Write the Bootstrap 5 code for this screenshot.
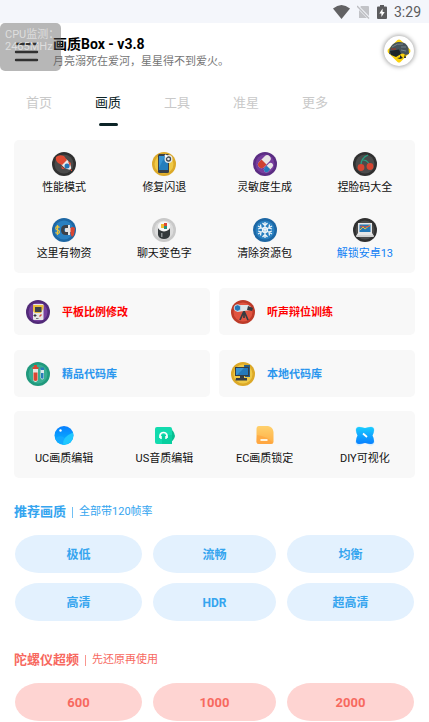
<!DOCTYPE html>
<html lang="zh-CN">
<head>
<meta charset="utf-8">
<meta name="viewport" content="width=device-width, initial-scale=1">
<title>画质Box</title>
<link href="https://cdn.jsdelivr.net/npm/bootstrap@5.3.0/dist/css/bootstrap.min.css" rel="stylesheet">
<style>
  body { font-family: Roboto, "Noto Sans CJK SC", sans-serif; font-size: 11px; line-height: 16px; color: #111; background: #fff; }
  button { font-family: inherit; }
  svg { display: block; flex: none; }
  .status-bar { height: 23px; background: #f4f6fb; color: #5c5c5e; font-size: 14px; padding: 1px 8px 0; gap: 7px; }
  .app-header { padding: 12px 14px 0; height: 57px; }
  .menu-btn { padding: 7px 0 0; margin-right: 14px; }
  .app-title { font-size: 14px; line-height: 18px; font-weight: 700; color: #000; }
  .app-sub { color: #757575; line-height: 18px; }
  .avatar { width: 30px; height: 30px; background: #fff; box-shadow: 0 0 4px 1px #aaa; margin: 1px 1px 0 0; }
  .cpu-float { left: 0; top: 23px; width: 61px; height: 48px; padding: 6px 5px; line-height: 12px; border-radius: 5px; background: rgba(90, 90, 90, .44); color: #dedede; white-space: nowrap; }
  .tab-strip { padding: 14px 0 0 26px; gap: 43px; height: 60px; }
  .tab-strip a { font-size: 13px; line-height: 18px; color: #c9c9c9; text-decoration: none; height: 32px; }
  .tab-strip a.active { color: #0c2427; }
  .tab-strip a.active::after { content: ""; display: block; width: 19px; height: 3px; margin: 11px auto 0; border-radius: 2px; background: #0c2427; }
  .page-main { padding: 0 14px; }
  .panel { background: #f8f8f8; border-radius: 5px; }
  .tool-grid { display: grid; grid-template-columns: repeat(4, 1fr); row-gap: 23px; padding: 12px 0; }
  .tool-btn { padding: 0; border: 0; background: none; color: #111; white-space: nowrap; gap: 4px; height: 43px; }
  .tool-btn.accent { color: #0f80f5; }
  .tile-grid { display: grid; grid-template-columns: 1fr 1fr; gap: 15px 9px; margin: 15px 0 14px; }
  .tile-btn { border: 0; height: 47px; padding: 0 12px; gap: 12px; font-weight: 700; color: #2b96ee; }
  .tile-btn span { padding-top: 2px; }
  .tile-btn.hot { color: #f00; }
  .sec-head { font-size: 11px; line-height: 18px; gap: 6px; margin: 25px 0 14px; }
  .red .sec-head { margin-top: 30px; }
  .sec-head h2 { font-size: 13px; line-height: 18px; font-weight: 700; margin: 0; }
  .sec-head i { width: 1px; height: 11px; background: currentColor; opacity: .7; }
  .blue { color: #35a5ef; }
  .red { color: #f7695f; }
  .pill-grid { display: grid; grid-template-columns: 127fr 123fr 127fr; gap: 10px 11px; padding: 0 1px; }
  .pill-btn { border: 0; height: 38px; padding: 2px 0 0; border-radius: 24px / 19px; font-size: 12px; font-weight: 700; background: #e3f1fe; color: inherit; }
  .red .pill-btn { background: #fed4d2; font-size: 13px; }
</style>
</head>
<body>
<div class="status-bar d-flex align-items-center justify-content-end">
  <svg width="17" height="14" viewBox="0 0 17 14"><path fill="#626264" d="M0 3.500Q8.500-3.500 17 3.500L8.500 14Z"/></svg>
  <svg width="13" height="14" viewBox="0 0 13 14"><path fill="#c2c3c7" d="M4 1H11Q12 1 12 2V13H2V4Z"/><path d="M0 1 12 13" stroke="#f4f6fb" stroke-width="3"/><path d="M0 1 12 13.500" stroke="#bdbec2" stroke-width="1.300"/></svg>
  <svg width="10" height="14" viewBox="0 0 10 14"><path fill="#5c5c5e" d="M3 0H7V1.500H9Q10 1.500 10 2.500V13Q10 14 9 14H1Q0 14 0 13V2.500Q0 1.500 1 1.500H3Z"/><path fill="#fff" d="M5.600 3.500 2.300 8.500H4.400V12L7.700 7H5.600Z"/></svg>
  <span>3:29</span>
</div>

<header class="app-header d-flex align-items-start">
  <button class="menu-btn border-0 bg-transparent" type="button" aria-label="菜单">
    <svg width="25" height="20" viewBox="0 0 25 20"><path d="M2 2H23M2 10H23M2 18H23" stroke="#111" stroke-width="2.400" stroke-linecap="round"/></svg>
  </button>
  <div class="flex-grow-1">
    <div class="app-title">画质Box - v3.8</div>
    <div class="app-sub">月亮溺死在爱河，星星得不到爱火。</div>
  </div>
  <div class="avatar rounded-circle d-flex align-items-center justify-content-center">
    <svg width="26" height="26" viewBox="0 0 26 26"><path fill="#fbd20b" d="M11.500 2Q13 .8 14.500 2L24 11.500Q25 13 24 14.500L14.500 24Q13 25 11.500 24L2 14.500Q1 13 2 11.500Z"/><path fill="#46535a" d="M3.500 11Q6 5 12 4Q20 3 22.500 10L23 16 20 17 17 15.500 9 17 3 16Z"/><path fill="#1d2529" d="M4 13 13 11.500 15 16 10 19 5 17ZM14 17 17 20 14 21 11 20 14 19.500ZM19 16 20 20 18 20Z"/><path d="M6 9Q11 5 17 6M15 9 20 9M15 12 20 13" fill="none" stroke="#75848a"/><path d="M5 11H10" stroke="#893d35" stroke-width="1.500"/></svg>
  </div>
</header>
<div class="cpu-float position-absolute">CPU监测：<br>2465MHz</div>

<nav class="tab-strip d-flex" aria-label="分类">
  <a href="#">首页</a><a href="#" class="active" aria-current="page">画质</a><a href="#">工具</a><a href="#">准星</a><a href="#">更多</a>
</nav>

<main class="page-main">
  <section class="panel tool-grid">
    <button type="button" class="tool-btn d-flex flex-column align-items-center">
      <svg width="24" height="24" viewBox="0 0 24 24"><circle cx="12" cy="12" r="12" fill="#303030"/><circle cx="12" cy="12" r="9.500" fill="#4a4a4a"/><path fill="#e9e9e9" d="M9 12 14 7Q20 11 19 18Q12 17 9 12Z"/><path fill="#e04a32" d="M4 5Q7 2 12 4L15 8 10 13 6 11Q3 8 4 5ZM9 14 13 17 10 17ZM16 9 18 15 19 11Z"/><circle cx="15" cy="14" r="2.500" fill="#2277b8"/><path stroke="#e04a32" d="M18 17 20 19"/></svg>
      <span>性能模式</span></button>
    <button type="button" class="tool-btn d-flex flex-column align-items-center">
      <svg width="24" height="24" viewBox="0 0 24 24"><circle cx="12" cy="12" r="12" fill="#dca928"/><circle cx="12" cy="12" r="9.500" fill="#efc947"/><rect x="6" y="2" width="11" height="19" rx="1.500" fill="#394047"/><path fill="#257ebc" d="M7 4H16V18H7Z"/><path fill="#3794d1" d="M7 4H13L7 16Z"/><circle cx="16.500" cy="7" r="4" fill="#e7e9eb"/><circle cx="16.500" cy="7" r="2" fill="none" stroke="#414a51" stroke-width="1.300"/><path d="M13 3 15 5" stroke="#fff" stroke-width="2"/></svg>
      <span>修复闪退</span></button>
    <button type="button" class="tool-btn d-flex flex-column align-items-center">
      <svg width="24" height="24" viewBox="0 0 24 24"><circle cx="12" cy="12" r="12" fill="#5b2d83"/><circle cx="12" cy="12" r="9.500" fill="#763c9d"/><g transform="rotate(-45 11 10)"><rect x="4" y="6.500" width="15" height="7" rx="3.500" fill="#e8e5e5"/><path fill="#cf4130" d="M11 6.500V13.500H7.500A3.500 3.500 0 0 1 7.500 6.500Z"/></g><g transform="rotate(-45 15.500 15.500)"><rect x="10" y="13" width="11" height="5" rx="2.500" fill="#e8e5e5"/><path fill="#2578ba" d="M15.500 13V18H12.500A2.500 2.500 0 0 1 12.500 13Z"/></g></svg>
      <span>灵敏度生成</span></button>
    <button type="button" class="tool-btn d-flex flex-column align-items-center">
      <svg width="24" height="24" viewBox="0 0 24 24"><circle cx="12" cy="12" r="12" fill="#303030"/><circle cx="12" cy="12" r="9.500" fill="#4b4b4b"/><path d="M8 13Q8 6 15 3M10 8Q14 8 16 12" fill="none" stroke="#26a384" stroke-width="1.200"/><circle cx="8" cy="15.500" r="3.400" fill="#d54531"/><circle cx="17" cy="14.500" r="3.400" fill="#d54531"/></svg>
      <span>捏脸码大全</span></button>
    <button type="button" class="tool-btn d-flex flex-column align-items-center">
      <svg width="24" height="24" viewBox="0 0 24 24"><circle cx="12" cy="12" r="12" fill="#1d67a4"/><circle cx="12" cy="12" r="9.500" fill="#2980c1"/><path d="M7.500 9.500Q6.500 8.500 5 8.700Q3.300 9.200 4 11Q4.500 12 6 12.200Q8 13 7.200 14.800Q6 16 3.500 14.500M5.500 7V17" fill="none" stroke="#efc43a" stroke-width="1.200"/><path fill="#e5e5e5" d="M13 10H20V14H13Z"/><path d="M17 8.500H14Q10.500 8.500 10.500 12Q10.500 15.500 14 15.500H17" fill="none" stroke="#3c4148" stroke-width="3"/><path d="M16 7H18V10H16ZM16 14H18V17H16Z" fill="#e7e7e7"/><path d="M18.500 10Q20 8 23 10L22 17 20 19 18.500 16Z" fill="#d94733"/></svg>
      <span>这里有物资</span></button>
    <button type="button" class="tool-btn d-flex flex-column align-items-center">
      <svg width="24" height="24" viewBox="0 0 24 24"><circle cx="12" cy="12" r="12" fill="#c9c9c9"/><circle cx="12" cy="12" r="9.500" fill="#dcdcdc"/><path fill="#34393b" d="M6 10H18V17Q17 21 12 21Q7 21 6 17Z"/><ellipse cx="12" cy="8.500" rx="6.200" ry="5" fill="#f6f6f6"/><path fill="#8b9092" d="M9 15H10.500V19H9Z"/><path fill="#efbd30" d="M9 6H12V10H9Z"/><path fill="#db4934" d="M12 5H15V8H12Z"/><path fill="#238f80" d="M12 8H15V11H12Z"/></svg>
      <span>聊天变色字</span></button>
    <button type="button" class="tool-btn d-flex flex-column align-items-center">
      <svg width="24" height="24" viewBox="0 0 24 24"><circle cx="12" cy="12" r="12" fill="#1d67a4"/><circle cx="12" cy="12" r="9.500" fill="#2980c1"/><g fill="none" stroke="#edf4f8" stroke-width="1.300"><path d="M12 4V20M5 8 19 16M19 8 5 16M9.500 5 12 7.500 14.500 5M9.500 19 12 16.500 14.500 19M5 11 8 10 7.500 6.500M19 13 16 14 16.500 17.500M16.500 6.500 16 10 19 11M7.500 17.500 8 14 5 13"/><circle cx="12" cy="12" r="2.500"/></g></svg>
      <span>清除资源包</span></button>
    <button type="button" class="tool-btn accent d-flex flex-column align-items-center">
      <svg width="24" height="24" viewBox="0 0 24 24"><circle cx="12" cy="12" r="12" fill="#303030"/><circle cx="12" cy="12" r="9.500" fill="#4b4b4b"/><path fill="#e6e6e6" d="M5 5H19V15L21 18Q21 19 20 19H4Q3 19 3 18L5 15Z"/><path fill="#2579b7" d="M6.500 6.500H17.500V14H6.500Z"/><path d="M7 12 10 9 12 11 17 7" fill="none" stroke="#ebbe37"/><path d="M7 9 9 8 12 9 17 8" fill="none" stroke="#da5040"/><path d="M4 18H20" stroke="#bcbcbc"/></svg>
      <span>解锁安卓13</span></button>
  </section>

  <section class="tile-grid">
    <button type="button" class="panel tile-btn hot d-flex align-items-center">
      <svg width="24" height="24" viewBox="0 0 24 24"><circle cx="12" cy="12" r="12" fill="#512a78"/><circle cx="12" cy="12" r="9.500" fill="#763f9d"/><rect x="7" y="4" width="10.500" height="16" rx="1" fill="#e6e5e5"/><path fill="#eabd3a" d="M7 5H17.500V8L15 13H9Q7 12 7 10Z"/><path fill="#3e4248" d="M9 7H15.500V12H9Z"/><path d="M7.500 15.500H10.500M9 14V17" stroke="#34383e"/><path d="M13.500 16.500 15.500 14.500" stroke="#d64a36" stroke-width="1.500"/><path d="M10 18.500H12.500" stroke="#777"/></svg>
      <span>平板比例修改</span></button>
    <button type="button" class="panel tile-btn hot d-flex align-items-center">
      <svg width="24" height="24" viewBox="0 0 24 24"><circle cx="12" cy="12" r="12" fill="#bd3b29"/><circle cx="12" cy="12" r="9.500" fill="#e15440"/><path d="M13 11 9 20M13 11 13 18M13 11 17 20" stroke="#363b40" stroke-width="1.700"/><path fill="#dee4e7" d="M5 5 17 5 20 7V10L6 12Z"/><path fill="#343b42" d="M17 6 22 8 21 11 16 10Z"/><circle cx="6.500" cy="8" r="3.300" fill="#2477b8" stroke="#c8d9e4"/></svg>
      <span>听声辩位训练</span></button>
    <button type="button" class="panel tile-btn d-flex align-items-center">
      <svg width="24" height="24" viewBox="0 0 24 24"><circle cx="12" cy="12" r="12" fill="#20997d"/><circle cx="12" cy="12" r="9.500" fill="#38ae92"/><path fill="#e8e6e3" d="M7 5H12V18Q9.500 22 7 18Z"/><path fill="#d84833" d="M8 3H11V5H12.500V7H6.500V5H8ZM7.500 10.500H11.500V18Q9.500 20 7.500 18Z"/><path fill="#dce8ec" d="M14.500 7H18V16Q16.200 19 14.500 16Z"/><path fill="#277bb9" d="M14.500 5.500H18V8H14.500ZM15 11H17.500V16Q16.200 17.500 15 16Z"/></svg>
      <span>精品代码库</span></button>
    <button type="button" class="panel tile-btn d-flex align-items-center">
      <svg width="24" height="24" viewBox="0 0 24 24"><circle cx="12" cy="12" r="12" fill="#dca928"/><circle cx="12" cy="12" r="9.500" fill="#efc947"/><path fill="#275e86" d="M13 3H19V15H14Z"/><path fill="#373d43" d="M4 5H18V14H4ZM9 14H13V16H9ZM5 16H16V18.500H4.500Z"/><path fill="#2479ba" d="M5 6H17V13H5Z"/><path fill="#3994d1" d="M5 6H13L6 13H5Z"/></svg>
      <span>本地代码库</span></button>
  </section>

  <section class="panel tool-grid">
    <button type="button" class="tool-btn d-flex flex-column align-items-center">
      <svg width="24" height="24" viewBox="0 0 24 24"><defs><linearGradient id="gBall" x2="0" y2="1"><stop stop-color="#087fff"/><stop offset="1" stop-color="#08baff"/></linearGradient></defs><circle cx="12" cy="12.500" r="9.500" fill="url(#gBall)"/><path fill="#15a9ff" d="M3 15.500Q9 11 13 15.500L12 22Q5 20 3 15.500Z"/><path fill="#20c8ff" d="M11 22Q10 14 21 9.500Q23 20 11 22Z"/><circle cx="8.500" cy="7.500" r="1.200" fill="#fff"/></svg>
      <span>UC画质编辑</span></button>
    <button type="button" class="tool-btn d-flex flex-column align-items-center">
      <svg width="24" height="24" viewBox="0 0 24 24"><path fill="#08bd90" d="M17 5Q22 7 23 13Q22 18 17 20Z"/><rect x="3" y="4" width="17" height="17" rx="2" fill="#12dbae"/><path fill="#08cf9f" d="M10 12H20V21H10Z"/><path d="M8 15V12.500Q8.500 9.500 11.500 9.500Q14.500 9.500 15 12.500V15" fill="none" stroke="#fff" stroke-width="1.700"/><path d="M9 13V16M14 13V16" stroke="#fff" stroke-width="1.500"/></svg>
      <span>US音质编辑</span></button>
    <button type="button" class="tool-btn d-flex flex-column align-items-center">
      <svg width="24" height="24" viewBox="0 0 24 24"><defs><linearGradient id="gDoc" x2="0" y2="1"><stop stop-color="#ffd16d"/><stop offset="1" stop-color="#ffad43"/></linearGradient></defs><path fill="url(#gDoc)" d="M6 3H15Q20 4 20.500 9V19Q20.500 21 18 21H6Q3.500 21 3.500 19V6Q3.500 3 6 3Z"/><path fill="#ffa13d" opacity=".6" d="M4 12Q14 13 20 20L18 21H6Q3.500 21 3.500 19Z"/><path d="M7.500 17H14.500" stroke="#fff3dc" stroke-width="2"/></svg>
      <span>EC画质锁定</span></button>
    <button type="button" class="tool-btn d-flex flex-column align-items-center">
      <svg width="24" height="24" viewBox="0 0 24 24"><defs><linearGradient id="gX" x2="0" y2="1"><stop stop-color="#19cdff"/><stop offset="1" stop-color="#087fff"/></linearGradient></defs><path d="M6 7 18 19M18 7 6 19" stroke="#d5effe" stroke-width="7" stroke-linecap="round"/><path fill="url(#gX)" d="M6 4Q9 4 12 5Q15 4 18 4Q21 4 21 7Q21 10 19.500 12.500Q21 15 21 18Q21 21 18 21Q15 21 12 20Q9 21 6 21Q3 21 3 18Q3 15 4.500 12.500Q3 10 3 7Q3 4 6 4Z"/><path d="M10 10.500 14 14" stroke="#fff" stroke-width="1.800"/></svg>
      <span>DIY可视化</span></button>
  </section>

  <section class="blue">
    <div class="sec-head d-flex align-items-center"><h2>推荐画质</h2><i></i><span>全部带120帧率</span></div>
    <div class="pill-grid">
      <button type="button" class="pill-btn">极低</button><button type="button" class="pill-btn">流畅</button><button type="button" class="pill-btn">均衡</button>
      <button type="button" class="pill-btn">高清</button><button type="button" class="pill-btn">HDR</button><button type="button" class="pill-btn">超高清</button>
    </div>
  </section>
  <section class="red">
    <div class="sec-head d-flex align-items-center"><h2>陀螺仪超频</h2><i></i><span>先还原再使用</span></div>
    <div class="pill-grid">
      <button type="button" class="pill-btn">600</button><button type="button" class="pill-btn">1000</button><button type="button" class="pill-btn">2000</button>
    </div>
  </section>
</main>
<script src="https://cdn.jsdelivr.net/npm/bootstrap@5.3.0/dist/js/bootstrap.bundle.min.js"></script>
</body>
</html>
